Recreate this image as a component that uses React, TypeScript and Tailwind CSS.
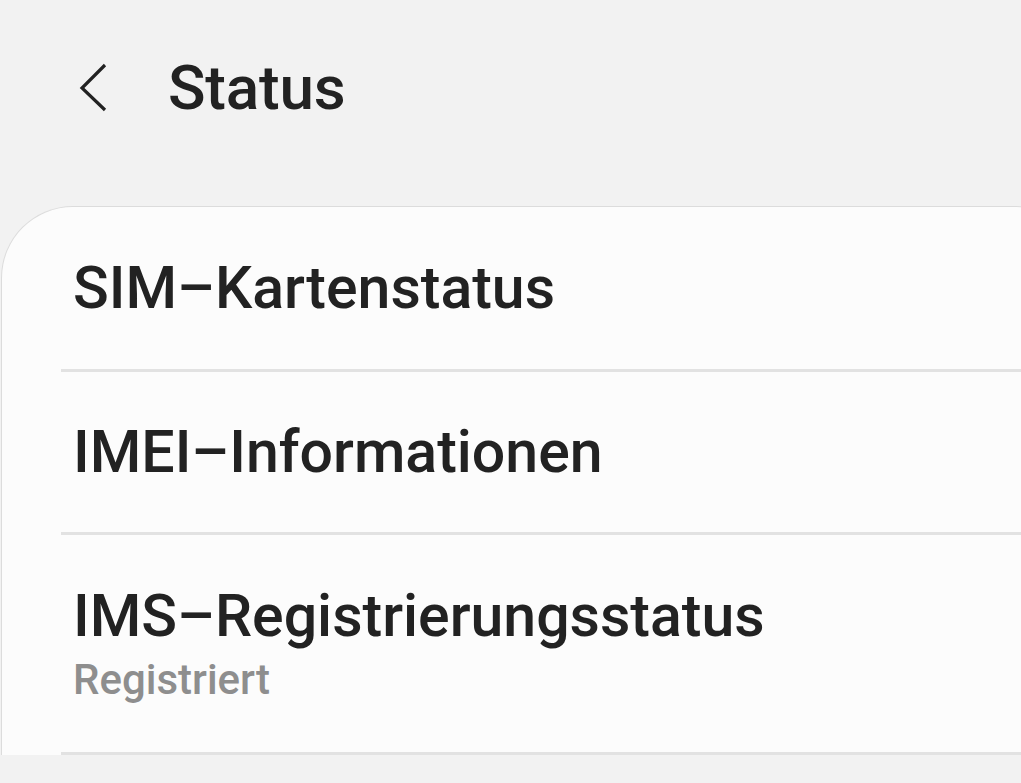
import React from "react";

const rows = [
  { title: "SIM–Kartenstatus", h: "h-[162px]" },
  { title: "IMEI–Informationen", h: "h-[160px]" },
  { title: "IMS–Registrierungsstatus", sub: "Registriert", h: "h-[217px]" },
];

export default function App() {
  return (
    <div
      className="h-[783px] w-[1021px] overflow-hidden bg-[#f2f2f2] text-[#222222]"
      style={{ fontFamily: "Roboto, 'Noto Sans', sans-serif" }}
    >
      <header className="flex h-[206px] items-start pt-[52px]">
        <button className="ml-[76px] mt-[10px] flex h-[50px] w-[40px] items-center justify-start">
          <svg width="34" height="50" viewBox="0 0 34 50" fill="none">
            <path
              d="M29 3 L6 26 L29 48"
              stroke="#222"
              strokeWidth="3.2"
              strokeLinecap="butt"
              strokeLinejoin="miter"
            />
          </svg>
        </button>
        <h1 className="ml-[52px] text-[62px] font-medium leading-[72px] tracking-[-0.2px]">
          Status
        </h1>
      </header>

      <div className="ml-[1px] w-[1085px] rounded-t-[72px] border border-b-0 border-[#dcdcdc] bg-[#fcfcfc]">
        {rows.map((r) => (
          <div key={r.title} className="flex flex-col">
            <div className={`flex flex-col justify-center pl-[71px] ${r.h}`}>
              <div className="text-[59px] font-medium leading-[64px] text-[#222]">
                {r.title}
              </div>
              {r.sub ? (
                <div className="mt-[8px] text-[42px] font-medium leading-[48px] text-[#8e8e8e]">
                  {r.sub}
                </div>
              ) : null}
            </div>
            <div className="ml-[59px] h-[3px] bg-[#e2e2e2]" />
          </div>
        ))}
      </div>
    </div>
  );
}
